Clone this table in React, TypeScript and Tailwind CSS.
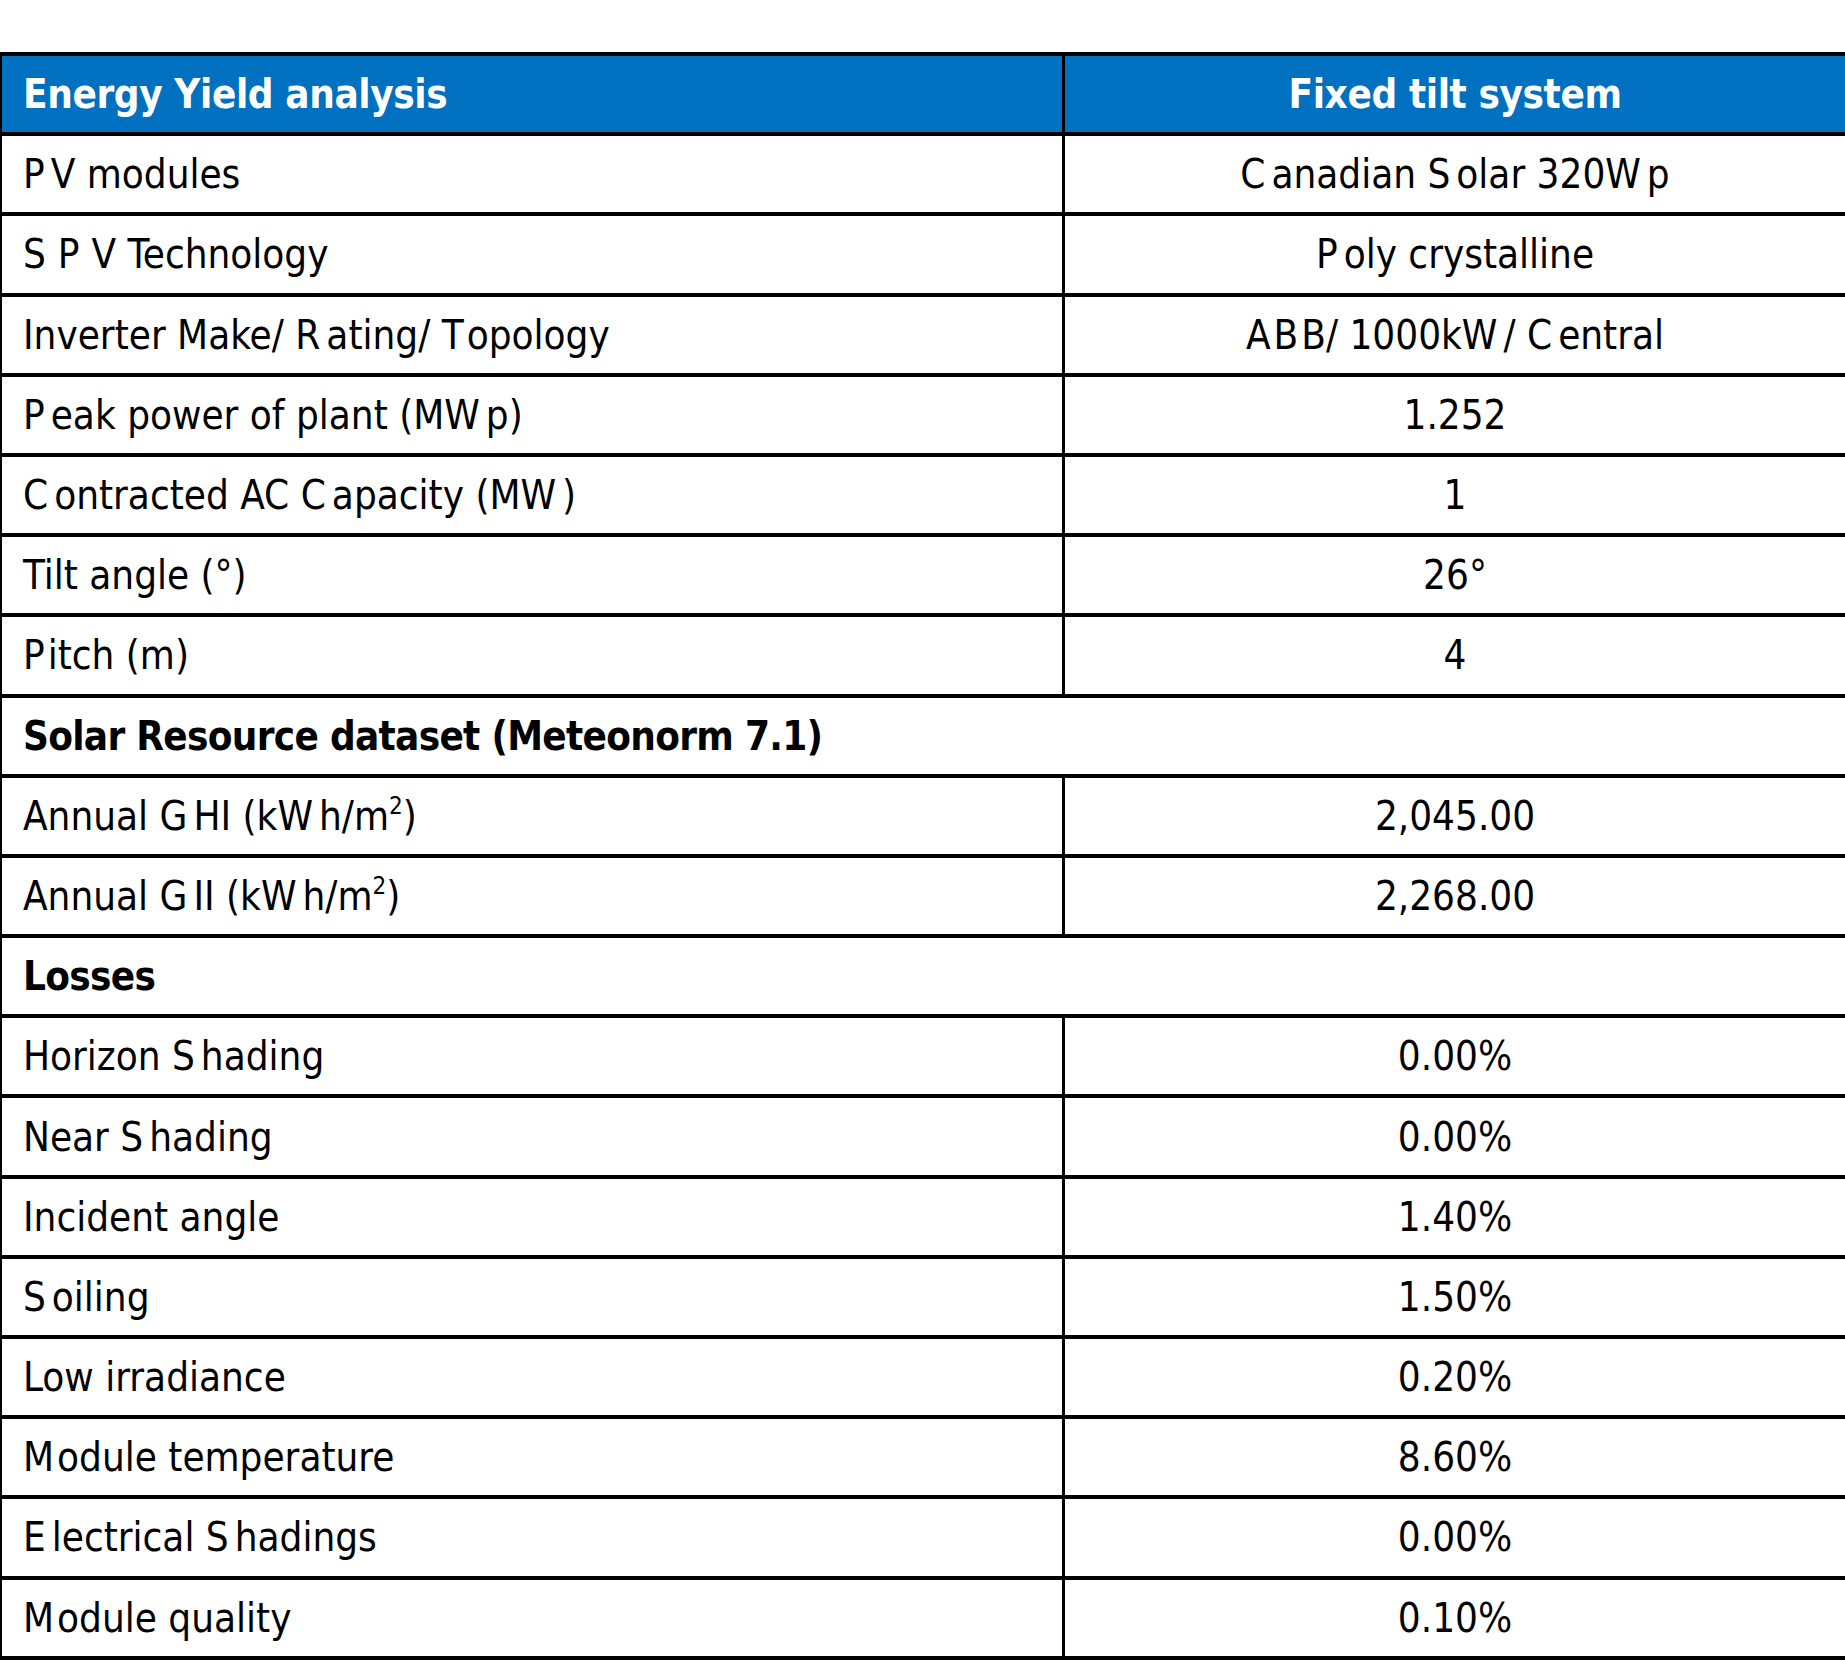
import React from "react";

type Row =
  | { kind: "head"; left: string; right: string }
  | { kind: "data"; left: string; right: string }
  | { kind: "section"; left: string };

const rows: Row[] = [
  { kind: "head", left: "Energy Yield analysis", right: "Fixed tilt system" },
  { kind: "data", left: "P|V modules", right: "C|anadian S|olar 320W|p" },
  { kind: "data", left: "S#P#V Technology", right: "P|oly crystalline" },
  { kind: "data", left: "Inverter Make/ R|ating/ T~opology", right: "A~B~B/ 1000kW|/ C|entral" },
  { kind: "data", left: "P|eak power of plant (MW|p)", right: "1.252" },
  { kind: "data", left: "C|ontracted AC C|apacity (MW|)", right: "1" },
  { kind: "data", left: "Tilt angle (°)", right: "26°" },
  { kind: "data", left: "P~itch (m)", right: "4" },
  { kind: "section", left: "Solar Resource dataset (Meteonorm 7.1)" },
  { kind: "data", left: "Annual G|HI (kW|h/m^2)", right: "2,045.00" },
  { kind: "data", left: "Annual G|II (kW|h/m^2)", right: "2,268.00" },
  { kind: "section", left: "Losses" },
  { kind: "data", left: "Horizon S|hading", right: "0.00%" },
  { kind: "data", left: "Near S|hading", right: "0.00%" },
  { kind: "data", left: "Incident angle", right: "1.40%" },
  { kind: "data", left: "S|oiling", right: "1.50%" },
  { kind: "data", left: "Low irradiance", right: "0.20%" },
  { kind: "data", left: "M~odule temperature", right: "8.60%" },
  { kind: "data", left: "E|lectrical S|hadings", right: "0.00%" },
  { kind: "data", left: "M~odule quality", right: "0.10%" },
];

function Gap({ c }: { c: string }) {
  if (c === "#") return <span className="inline-block w-[12px]" />;
  if (c === "~") return <span className="inline-block w-[3px]" />;
  return <span className="inline-block w-[6px]" />;
}

function T({ text }: { text: string }) {
  const tokens = text.split(/([|~#])/);
  return (
    <>
      {tokens.map((p, i) => {
        if (p === "|" || p === "~" || p === "#") return <Gap key={i} c={p} />;
        const sup = p.split("^");
        return (
          <React.Fragment key={i}>
            {sup.length > 1 ? (
              <>
                {sup[0]}
                <span className="relative top-[-10px] text-[24px]">{sup[1][0]}</span>
                {sup[1].slice(1)}
              </>
            ) : (
              p
            )}
          </React.Fragment>
        );
      })}
    </>
  );
}

export default function App() {
  return (
    <div
      className="w-[1845px] min-h-[1670px] bg-white pt-[52px] overflow-hidden"
      style={{ fontFamily: "'DejaVu Sans Condensed', 'DejaVu Sans', sans-serif" }}
    >
      <div className="w-[1845px] border-l-2 border-t-4 border-black [font-stretch:condensed]">
        {rows.map((r, i) => {
          if (r.kind === "section") {
            return (
              <div
                key={i}
                className="flex h-[80.2px] items-center border-b-4 border-black pl-[21px] text-[40px] font-bold tracking-[-0.7px] text-black"
              >
                <T text={r.left} />
              </div>
            );
          }
          const head = r.kind === "head";
          return (
            <div
              key={i}
              className={
                head
                  ? "flex h-[80.2px] border-b-4 border-black bg-[#0070c0] text-white font-bold tracking-[-0.4px]"
                  : "flex h-[80.2px] border-b-4 border-black text-black"
              }
            >
              <div className="flex w-[1060px] shrink-0 items-center pl-[21px] text-[40px] whitespace-nowrap">
                <T text={r.left} />
              </div>
              <div className="flex flex-1 items-center justify-center border-l-[3px] border-black text-[40px] whitespace-nowrap">
                <T text={r.right} />
              </div>
            </div>
          );
        })}
      </div>
    </div>
  );
}
